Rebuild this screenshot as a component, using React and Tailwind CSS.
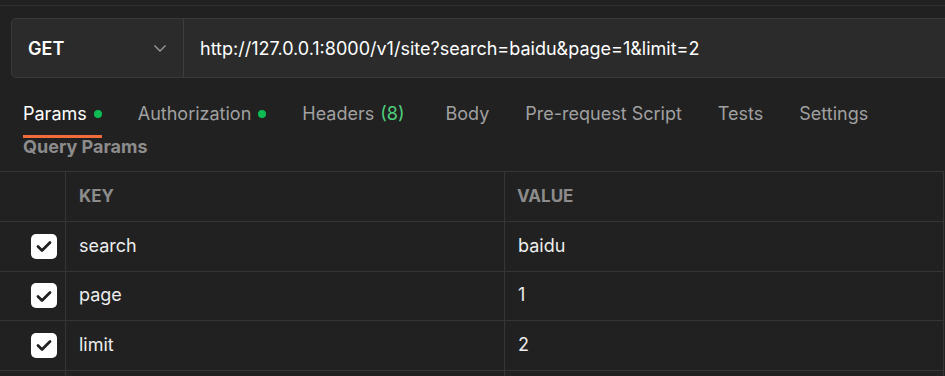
import React from 'react'

const tabs = [
  { label: 'Params', dot: true, active: true },
  { label: 'Authorization', dot: true },
  { label: 'Headers', count: '(8)' },
  { label: 'Body' },
  { label: 'Pre-request Script' },
  { label: 'Tests' },
  { label: 'Settings' },
]

const params = [
  { key: 'search', value: 'baidu' },
  { key: 'page', value: '1' },
  { key: 'limit', value: '2' },
]

const Check = () => (
  <div className="w-[26px] h-[25px] rounded-[5px] bg-white flex items-center justify-center">
    <svg width="18" height="18" viewBox="0 0 18 18" fill="none">
      <path d="M3 9.5l4 4 8-8" stroke="#212121" strokeWidth="2.8" strokeLinecap="round" strokeLinejoin="round" />
    </svg>
  </div>
)

const App = () => {
  return (
    <div className="w-[945px] h-[376px] bg-[#212121] overflow-hidden text-[18px] font-['Inter','Liberation_Sans',sans-serif]">
      <div className="h-[5px]" />
      <div className="border-t border-[#2f2f2f]" />

      {/* url bar */}
      <div className="ml-[11px] mt-[12px] h-[60px] w-[950px] flex rounded-l-[5px] border border-[#393939] bg-[#2b2b2b]">
        <div className="w-[172px] flex items-center justify-between pl-[16px] pr-[16px] border-r border-[#3d3d3d]">
          <span className="font-semibold text-white text-[18px]">GET</span>
          <svg width="14" height="14" viewBox="0 0 14 14" fill="none">
            <path d="M1.5 4.5L7 10l5.5-5.5" stroke="#9a9a9a" strokeWidth="1.4" />
          </svg>
        </div>
        <div className="flex items-center pl-[16px] text-white text-[18px]">
          http://127.0.0.1:8000/v1/site?search=baidu&amp;page=1&amp;limit=2
        </div>
      </div>

      {/* tabs */}
      <div className="flex gap-[36px] pl-[23px] mt-[22px] h-[38px]">
        {tabs.map((t) => (
          <div
            key={t.label}
            className={`flex items-start h-full leading-[27px] border-b-[3px] ${t.active ? 'border-[#f26b3a] text-white' : 'border-transparent text-[#a0a0a0]'} ${t.count ? 'mr-[5px]' : ''}`}
          >
            <span>{t.label}</span>
            {t.dot && <span className="ml-[7px] mt-[10px] w-[8px] h-[8px] rounded-full bg-[#0cbb52]" />}
            {t.count && <span className="ml-[6px] text-[#4fcf7e]">{t.count}</span>}
          </div>
        ))}
      </div>

      <div className="pl-[23px] h-[17px] flex items-center font-bold text-[#8c8c8c]">Query Params</div>

      {/* table */}
      <div className="mt-[16px] border-t border-[#353535] w-[944px] border-r">
        <div className="grid grid-cols-[66px_439px_439px] h-[50px] border-b border-[#353535]">
          <div className="border-r border-[#353535]" />
          <div className="border-r border-[#353535] flex items-center pl-[13px] font-bold text-[17px] text-[#8c8c8c]">KEY</div>
          <div className="flex items-center pl-[12px] font-bold text-[17px] text-[#8c8c8c]">VALUE</div>
        </div>
        {params.map((p) => (
          <div key={p.key} className="grid grid-cols-[66px_439px_439px] h-[49.5px] border-b border-[#353535]">
            <div className="border-r border-[#353535] flex items-center justify-end pr-[8px]">
              <Check />
            </div>
            <div className="border-r border-[#353535] flex items-center pl-[13px] pb-[2px] text-[#ededed]">{p.key}</div>
            <div className="flex items-center pl-[13px] pb-[2px] text-[#ededed]">{p.value}</div>
          </div>
        ))}
        <div className="grid grid-cols-[66px_439px_439px] h-[40px]">
          <div className="border-r border-[#353535]" />
          <div className="border-r border-[#353535]" />
          <div />
        </div>
      </div>
    </div>
  )
}

export default App
